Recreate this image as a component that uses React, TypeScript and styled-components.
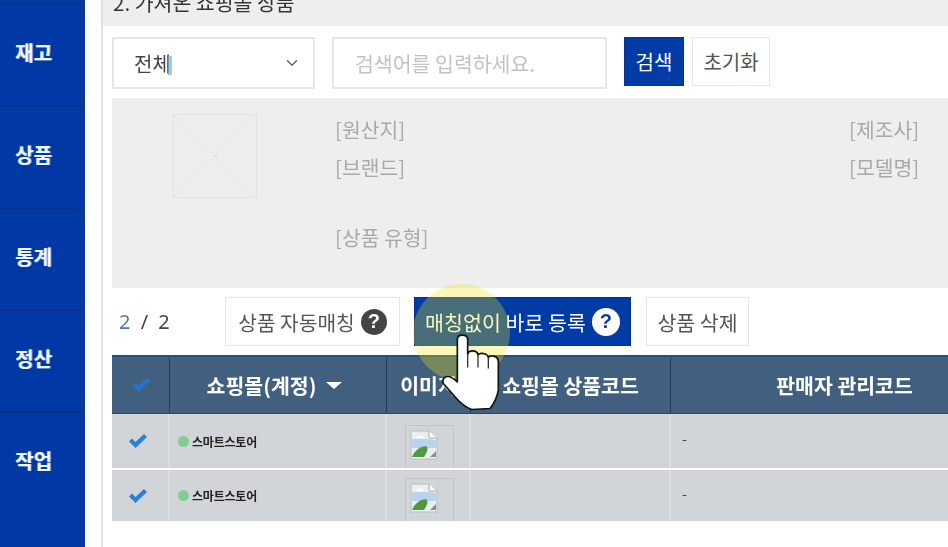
import React from 'react';
import styled, { createGlobalStyle } from 'styled-components';
import { ChevronDown } from 'lucide-react';

const GlobalStyle = createGlobalStyle`
  html, body {
    margin: 0;
    padding: 0;
    width: 948px;
    height: 547px;
    overflow: hidden;
    background: #fff;
  }
  * { box-sizing: border-box; }
  body {
    font-family: "Noto Sans CJK KR", "Noto Sans", sans-serif;
    color: #444;
  }
`;

const Page = styled.div`
  position: relative;
  display: flex;
  width: 948px;
  height: 547px;
  overflow: hidden;
  filter: blur(0.5px);
`;

const Sidebar = styled.nav`
  flex: 0 0 85px;
  display: flex;
  flex-direction: column;
  padding-top: 3px;
  background: #0039a6;
  border-right: 2px solid #16367f;
`;

const SideItem = styled.div`
  flex: 0 0 102px;
  display: flex;
  align-items: center;
  padding: 0 0 5px 15px;
  border-top: 2px solid #0b3184;
  color: #f2f7ff;
  font-size: 20px;
  font-weight: 700;
  text-shadow: 1px 0 0 rgba(170, 205, 255, 0.7);
`;

const Main = styled.main`
  flex: 1;
  min-width: 0;
  margin-left: 16px;
  border-left: 2px solid #e2e2e2;
  display: flex;
  flex-direction: column;
`;

const TitleBar = styled.div`
  flex: 0 0 26px;
  display: flex;
  align-items: flex-end;
  overflow: hidden;
  padding: 0 0 11px 10px;
  background: #eeeeee;
  font-size: 20.5px;
  line-height: 26px;
  color: #333;
`;

const Content = styled.div`
  padding: 11px 0 0 9px;
  display: flex;
  flex-direction: column;
`;

const SearchRow = styled.div`
  display: flex;
  align-items: flex-start;
  height: 51px;
`;

const Select = styled.div`
  flex: 0 0 203px;
  height: 52px;
  margin-right: 17px;
  border: 2px solid #e6e6e6;
  display: flex;
  align-items: center;
  justify-content: space-between;
  padding: 0 12px 0 20px;
  font-size: 20px;
  color: #444;
  svg { color: #666; }
`;

const Caret = styled.span`
  display: inline-block;
  width: 4px;
  height: 19px;
  margin-left: -3px;
  vertical-align: -3px;
  background: rgba(130, 175, 215, 0.7);
`;

const SearchInput = styled.input`
  flex: 0 0 275px;
  height: 52px;
  margin-right: 17px;
  padding: 0 21px;
  border: 2px solid #e6e6e6;
  outline: none;
  font: inherit;
  font-size: 20.5px;
  &::placeholder { color: #c2c2c2; opacity: 1; }
`;

const Button = styled.button<{ $primary?: boolean }>`
  display: inline-flex;
  align-items: center;
  justify-content: center;
  gap: 6px;
  height: 49px;
  padding: 0;
  font: inherit;
  font-size: 20px;
  white-space: nowrap;
  border: 1px solid ${p => (p.$primary ? '#0b2f8c' : '#e6e6e6')};
  background: ${p => (p.$primary ? '#003ba6' : '#fff')};
  color: ${p => (p.$primary ? '#fff' : '#555')};
`;

const SearchButton = styled(Button)`
  width: 60px;
  margin-right: 8px;
`;

const ResetButton = styled(Button)`
  width: 78px;
`;

const InfoBox = styled.section`
  height: 190px;
  margin-top: 10px;
  background: #eeeeee;
  display: grid;
  grid-template-columns: 223px 514px 1fr;
  color: #a9a9a9;
  font-size: 20.4px;
`;

const Thumb = styled.svg`
  display: block;
  margin: 16px 0 0 61px;
`;

const InfoCol = styled.div`
  padding-top: 12px;
  line-height: 38px;
`;

const InfoGap = styled.div`
  height: 32px;
`;

const Toolbar = styled.div`
  display: flex;
  align-items: center;
  height: 49px;
  margin-top: 9px;
`;

const Counter = styled.div`
  flex: 0 0 113px;
  padding-left: 7px;
  font-family: "Noto Sans", sans-serif;
  font-size: 20px;
  color: #444;
  word-spacing: 5px;
  b { font-weight: 400; color: #4a7ab5; }
`;

const AutoButton = styled(Button)`
  width: 175px;
  margin-right: 14px;
  font-size: 20.3px;
`;

const DirectButton = styled(Button)`
  width: 217px;
  margin-right: 15px;
  font-size: 20.6px;
`;

const DeleteButton = styled(Button)`
  width: 103px;
  font-size: 20.5px;
`;

const HelpIcon = styled.span<{ $light?: boolean }>`
  flex: none;
  width: ${p => (p.$light ? 28 : 26)}px;
  height: ${p => (p.$light ? 28 : 26)}px;
  border-radius: 50%;
  display: inline-flex;
  align-items: center;
  justify-content: center;
  font-family: "Liberation Sans", sans-serif;
  font-size: 20px;
  font-weight: 700;
  background: ${p => (p.$light ? '#fff' : '#444')};
  color: ${p => (p.$light ? '#0b3fa5' : '#fff')};
`;

const COLS = '58px 217px 84px 200px 348px';

const TableHead = styled.div`
  display: grid;
  grid-template-columns: ${COLS};
  height: 59px;
  margin-top: 9px;
  background: #41607f;
  border-top: 2px solid #1f5378;
  border-bottom: 1px solid #2c4762;
`;

const HeadCell = styled.div`
  display: flex;
  align-items: center;
  justify-content: center;
  gap: 10px;
  border-right: 1px solid #223d5c;
  color: #fff;
  font-size: 20.5px;
  font-weight: 700;
  white-space: nowrap;
  overflow: hidden;
`;

const SortableHead = styled(HeadCell)`
  padding-right: 7px;
`;

const SortArrow = styled.span`
  width: 0;
  height: 0;
  border-left: 8px solid transparent;
  border-right: 8px solid transparent;
  border-top: 7px solid #fff;
`;

const Row = styled.div<{ $pad: number; $height: number }>`
  display: grid;
  grid-template-columns: ${COLS};
  height: ${p => p.$height}px;
  margin-bottom: 2px;
  background: #d2d5d8;
  --img-pad: ${p => p.$pad}px;
`;

const Cell = styled.div`
  display: flex;
  align-items: center;
  border-right: 2px solid #dddfe1;
  min-height: 0;
`;

const CheckCell = styled(Cell)`
  justify-content: center;
  padding-right: 4px;
`;

const StoreCell = styled(Cell)`
  gap: 3px;
  padding-left: 8px;
  font-size: 12px;
  font-weight: 700;
  letter-spacing: -0.2px;
  color: #222;
`;

const StoreDot = styled.span`
  flex: none;
  width: 11px;
  height: 11px;
  border-radius: 50%;
  background: #7fcf94;
`;

const ImageCell = styled(Cell)`
  justify-content: center;
  align-items: flex-start;
  padding: var(--img-pad) 0 0 2px;
`;

const ImageFrame = styled.div`
  width: 49px;
  height: 43px;
  padding: 4px 0 0 4px;
  border: 1px solid #c2c5c8;
  border-bottom: none;
`;

const DashCell = styled(Cell)`
  padding: 0 0 6px 11px;
  font-size: 14px;
  color: #444;
`;

const Highlight = styled.div`
  position: absolute;
  left: 413px;
  top: 284px;
  width: 97px;
  height: 97px;
  border-radius: 50%;
  background: rgba(240, 230, 20, 0.3);
  pointer-events: none;
`;

const HandCursor = styled.svg`
  position: absolute;
  left: 440px;
  top: 330px;
  pointer-events: none;
`;

function Check({ color }: { color: string }) {
  return (
    <svg width="20" height="16" viewBox="0 0 20 16">
      <path d="M1 8.5 L4 5.5 L7.5 9 L16 1 L19 4 L7.5 15 Z" fill={color} />
    </svg>
  );
}

function BrokenImage() {
  return (
    <svg width="28" height="30" viewBox="0 0 28 30">
      <path d="M1 1 H19 L27 8 V29 H1 Z" fill="#e9eef2" stroke="#b9bcc0" />
      <path d="M19 1 V8 H27" fill="#fff" stroke="#a8abaf" />
      <path d="M2 9 H18 L26 10 V18 H2 Z" fill="#b9d3ee" />
      <path d="M5 8 Q9 3 14 8 Z" fill="#fff" />
      <path d="M2 27 Q6 17 16 16 Q20 18 14 27 Z" fill="#4f9a3c" />
      <path d="M20 27 L26 21 V27 Z" fill="#8a8d90" />
    </svg>
  );
}

function TableRow({ pad, height }: { pad: number; height: number }) {
  return (
    <Row $pad={pad} $height={height}>
      <CheckCell><Check color="#2b7fd8" /></CheckCell>
      <StoreCell><StoreDot />스마트스토어</StoreCell>
      <ImageCell><ImageFrame><BrokenImage /></ImageFrame></ImageCell>
      <Cell />
      <DashCell>-</DashCell>
    </Row>
  );
}

export default function App() {
  return (
    <Page>
      <GlobalStyle />
      <Sidebar>
        {['재고', '상품', '통계', '정산', '작업'].map(label => (
          <SideItem key={label}>{label}</SideItem>
        ))}
      </Sidebar>
      <Main>
        <TitleBar>2. 가져온 쇼핑몰 상품</TitleBar>
        <Content>
          <SearchRow>
            <Select>
              <span>전체<Caret /></span>
              <ChevronDown size={18} strokeWidth={2} />
            </Select>
            <SearchInput placeholder="검색어를 입력하세요." />
            <SearchButton $primary>검색</SearchButton>
            <ResetButton>초기화</ResetButton>
          </SearchRow>
          <InfoBox>
            <Thumb width="84" height="84" viewBox="0 0 84 84">
              <rect x="0.5" y="0.5" width="83" height="83" fill="none" stroke="#e3e3e3" />
              <path d="M0 0 L84 84 M84 0 L0 84" stroke="#e0e0e0" />
            </Thumb>
            <InfoCol>
              <div>[원산지]</div>
              <div>[브랜드]</div>
              <InfoGap />
              <div>[상품 유형]</div>
            </InfoCol>
            <InfoCol>
              <div>[제조사]</div>
              <div>[모델명]</div>
            </InfoCol>
          </InfoBox>
          <Toolbar>
            <Counter><b>2</b> / 2</Counter>
            <AutoButton>상품 자동매칭 <HelpIcon>?</HelpIcon></AutoButton>
            <DirectButton $primary>매칭없이 바로 등록 <HelpIcon $light>?</HelpIcon></DirectButton>
            <DeleteButton>상품 삭제</DeleteButton>
          </Toolbar>
          <TableHead>
            <HeadCell><Check color="#2673cc" /></HeadCell>
            <SortableHead>쇼핑몰(계정) <SortArrow /></SortableHead>
            <HeadCell>이미지</HeadCell>
            <HeadCell>쇼핑몰 상품코드</HeadCell>
            <HeadCell>판매자 관리코드</HeadCell>
          </TableHead>
          <TableRow pad={11} height={54} />
          <TableRow pad={8} height={51} />
        </Content>
      </Main>
      <Highlight />
      <HandCursor width="60" height="82" viewBox="120 150 180 245">
        <path
          d="M172 178 Q172 165 187 165 Q203 165 203 178 L203 222 Q205 212 218 212 Q232 212 234 224 Q238 218 250 220 Q263 222 265 232 Q270 226 282 228 Q295 232 295 245 L295 330 Q290 360 270 385 L215 388 Q190 380 165 350 L130 310 Q125 295 138 290 Q150 285 172 305 Z"
          fill="#fff"
          stroke="#111"
          strokeWidth="5"
          strokeLinejoin="round"
        />
        <path d="M203 222 V262 M234 224 V262 M265 232 V265" stroke="#333" strokeWidth="4" fill="none" />
      </HandCursor>
    </Page>
  );
}
